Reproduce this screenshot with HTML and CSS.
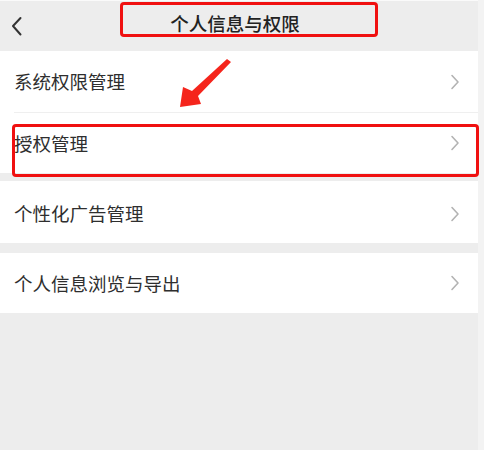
FILE: index.html
```html
<!DOCTYPE html>
<html lang="zh-CN">
<head>
<meta charset="utf-8">
<title>个人信息与权限</title>
<link rel="stylesheet" href="styles.css">
</head>
<body>
<div class="screen">
  <div class="app">
    <header class="topbar">
      <span class="back">
        <svg width="14" height="22" viewBox="0 0 14 22"><path d="M9.5 3 L2 11 L9.5 19.5" fill="none" stroke="#333" stroke-width="2" stroke-linecap="round" stroke-linejoin="round"/></svg>
      </span>
      <h1 class="title">个人信息与权限</h1>
    </header>
    <section class="card">
      <div class="row row-first">
        <span class="label">系统权限管理</span>
        <svg class="chev" width="10" height="16" viewBox="0 0 10 16"><path d="M2 1.5 L8 8 L2 14.5" fill="none" stroke="#b3b3b3" stroke-width="1.6" stroke-linecap="round" stroke-linejoin="round"/></svg>
      </div>
      <div class="sep"></div>
      <div class="row">
        <span class="label">授权管理</span>
        <svg class="chev" width="10" height="16" viewBox="0 0 10 16"><path d="M2 1.5 L8 8 L2 14.5" fill="none" stroke="#b3b3b3" stroke-width="1.6" stroke-linecap="round" stroke-linejoin="round"/></svg>
      </div>
    </section>
    <section class="card card-gap-s">
      <div class="row row-tall">
        <span class="label">个性化广告管理</span>
        <svg class="chev" width="10" height="16" viewBox="0 0 10 16"><path d="M2 1.5 L8 8 L2 14.5" fill="none" stroke="#b3b3b3" stroke-width="1.6" stroke-linecap="round" stroke-linejoin="round"/></svg>
      </div>
    </section>
    <section class="card card-gap-l">
      <div class="row">
        <span class="label">个人信息浏览与导出</span>
        <svg class="chev" width="10" height="16" viewBox="0 0 10 16"><path d="M2 1.5 L8 8 L2 14.5" fill="none" stroke="#b3b3b3" stroke-width="1.6" stroke-linecap="round" stroke-linejoin="round"/></svg>
      </div>
    </section>

    <div class="mark mark-title"></div>
    <div class="mark mark-item"></div>
    <svg class="pointer" width="60" height="56" viewBox="175 55 60 56">
      <polygon points="227,59 231,62 198,96 201,104 180,107 183,87 192,91" fill="#f5251c"/>
    </svg>
  </div>
  <div class="edge"></div>
</div>
</body>
</html>
```

FILE: styles.css
```css
html, body {
  margin: 0;
  padding: 0;
  background: #ffffff;
}

body {
  font-family: "Noto Sans CJK SC", "Noto Sans", sans-serif;
  color: #333;
}

.screen {
  display: flex;
  width: 485px;
  height: 450px;
  overflow: hidden;
}

.app {
  position: relative;
  width: 478px;
  height: 450px;
  background: #ededed;
  display: flex;
  flex-direction: column;
}

.edge {
  width: 6px;
  height: 450px;
  background: #f3f3f3;
}

.topbar {
  height: 50px;
  border-top: 1px solid #fafafa;
  display: flex;
  align-items: center;
  justify-content: center;
  padding-right: 8px;
  position: relative;
}

.back {
  position: absolute;
  left: 11px;
  top: 14px;
  display: flex;
}

.title {
  margin: -6px 0 0;
  font-size: 18.5px;
  font-weight: 500;
  color: #222;
  line-height: 1;
}

.card {
  background: #ffffff;
  display: flex;
  flex-direction: column;
}

.card-gap-s {
  margin-top: 8px;
}

.card-gap-l {
  margin-top: 10px;
}

.row {
  height: 60px;
  display: flex;
  align-items: center;
  justify-content: space-between;
  padding: 0 18px 0 14px;
}

.row-first {
  height: 61px;
}

.row-tall {
  height: 62px;
  padding-top: 3px;
  box-sizing: border-box;
}

.label {
  font-size: 18.5px;
  color: #2e2e2e;
  line-height: 1;
}

.chev {
  display: block;
}

.sep {
  height: 1px;
  background: #efefef;
  margin-left: 14px;
}

.mark {
  position: absolute;
  border: 3px solid #f01010;
  border-radius: 4px;
  box-sizing: border-box;
  pointer-events: none;
}

.mark-title {
  left: 120px;
  top: 2px;
  width: 258px;
  height: 35px;
}

.mark-item {
  left: 12px;
  top: 124px;
  width: 467px;
  height: 53px;
}

.pointer {
  position: absolute;
  left: 175px;
  top: 55px;
}
```
